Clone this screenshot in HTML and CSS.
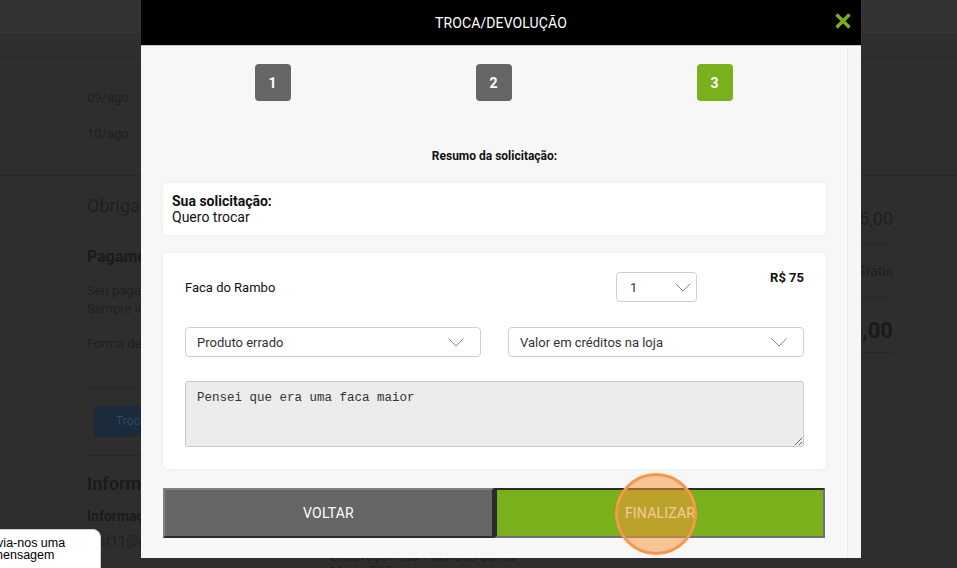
FILE: index.html
```html
<!DOCTYPE html>
<html lang="pt-BR">
<head>
<meta charset="utf-8">
<title>Troca/Devolução</title>
<link rel="stylesheet" href="styles.css">
</head>
<body>
<div class="page">
  <header class="topbar"></header>
  <div class="subbar"></div>
  <section class="dates">
    <div class="date">09/ago</div>
    <div class="date">10/ago</div>
  </section>
  <section class="summary">
    <div class="left-col">
      <div class="thanks">Obrigado por comprar conosco!</div>
      <h3 class="sec-title">Pagamento</h3>
      <p class="sec-text">Seu pagamento foi aprovado com sucesso.<br>Sempre verifique seu e-mail.</p>
      <p class="sec-text pay-form">Forma de pagamento: Boleto</p>
      <div class="divider"></div>
      <div class="action-row"><span class="bg-btn">Troca/Devolução</span></div>
      <div class="divider"></div>
      <h3 class="info-title">Informações</h3>
      <div class="info-grid">
        <div class="info-col">
          <div class="info-head">Informações de contato</div>
          <div class="info-line">josf11@gmail.com</div>
        </div>
        <div class="info-col info-col-addr">
          <div class="info-head">Informações de entrega</div>
          <div class="info-line">Nome: José Silva</div>
          <div class="info-line">Endereço: Rua Pacheco Santa</div>
          <div class="info-line">Maria 585</div>
        </div>
      </div>
    </div>
    <div class="right-col">
      <div class="tot-row tot-sub">R$ 75,00</div>
      <div class="tot-row tot-ship">Grátis</div>
      <div class="tot-row tot-total">R$ 75,00</div>
    </div>
  </section>
</div>

<div class="overlay">
  <div class="modal">
    <div class="modal-head">
      <h2 class="modal-title">TROCA/DEVOLUÇÃO</h2>
      <span class="close" aria-label="Fechar">
        <svg width="16" height="16" viewBox="0 0 16 16"><path d="M1.5 1.5 L14.5 14.5 M14.5 1.5 L1.5 14.5" stroke="#79b01b" stroke-width="3.4" fill="none"/></svg>
      </span>
    </div>
    <div class="modal-body">
      <div class="modal-content">
        <div class="steps">
          <div class="step-cell"><span class="step">1</span></div>
          <div class="step-cell"><span class="step">2</span></div>
          <div class="step-cell"><span class="step step-active">3</span></div>
        </div>
        <div class="resumo">Resumo da solicitação:</div>
        <div class="card card-request">
          <div class="req-label">Sua solicitação:</div>
          <div class="req-value">Quero trocar</div>
        </div>
        <div class="card card-item">
          <div class="item-row">
            <div class="item-name">Faca do Rambo</div>
            <div class="select select-qty"><span>1</span>
              <svg width="16" height="9" viewBox="0 0 16 9"><polyline points="0.5,0.5 8,8 15.5,0.5" fill="none" stroke="#8a8a8a" stroke-width="1"/></svg>
            </div>
            <div class="item-price">R$ 75</div>
          </div>
          <div class="select-row">
            <div class="select select-wide"><span>Produto errado</span>
              <svg width="16" height="9" viewBox="0 0 16 9"><polyline points="0.5,0.5 8,8 15.5,0.5" fill="none" stroke="#8a8a8a" stroke-width="1"/></svg>
            </div>
            <div class="select select-wide"><span>Valor em créditos na loja</span>
              <svg width="16" height="9" viewBox="0 0 16 9"><polyline points="0.5,0.5 8,8 15.5,0.5" fill="none" stroke="#8a8a8a" stroke-width="1"/></svg>
            </div>
          </div>
          <textarea class="comment">Pensei que era uma faca maior</textarea>
        </div>
        <div class="actions">
          <span class="btn btn-back">VOLTAR</span>
          <span class="btn btn-finish">FINALIZAR</span>
        </div>
      </div>
      <div class="scroll-track"></div>
    </div>
  </div>
  <div class="focus-ring"></div>
</div>

<div class="chat-bubble">Envia-nos uma<br>mensagem</div>
</body>
</html>
```

FILE: styles.css
```css
* { box-sizing: border-box; }

html, body {
  margin: 0;
  padding: 0;
  width: 957px;
  height: 568px;
  overflow: hidden;
  background: #2e2e2e;
  font-family: Roboto, "Liberation Sans", Arial, sans-serif;
}

/* ---------- dimmed background page ---------- */
.page {
  color: #1e1e1e;
}

.topbar {
  height: 35px;
  background: #333333;
  border-bottom: 1px solid #2a2a2a;
}

.subbar {
  height: 23px;
  background: #2f2f2f;
  border-bottom: 1px solid #272727;
}

.dates {
  height: 118px;
  padding: 31px 0 0 87px;
  display: flex;
  flex-direction: column;
  gap: 18px;
  border-bottom: 1px solid #272727;
}

.date {
  font-size: 13px;
  line-height: 18px;
  color: #202020;
}

.summary {
  display: flex;
  justify-content: space-between;
  padding: 0 64px 0 87px;
}

.left-col {
  width: 520px;
  padding-top: 19px;
}

.thanks {
  font-size: 18px;
  line-height: 22px;
  color: #1f1f1f;
}

.sec-title {
  margin: 30px 0 0;
  font-size: 16px;
  line-height: 20px;
  font-weight: 700;
  color: #1b1b1b;
}

.sec-text {
  margin: 15px 0 0;
  font-size: 13px;
  line-height: 18px;
  color: #202020;
}

.pay-form {
  margin-top: 17px;
}

.divider {
  margin-top: 34px;
  height: 1px;
  background: #262626;
}

.action-row {
  padding: 18px 0 0 7px;
}

.divider + .action-row + .divider {
  margin-top: 18px;
}

.bg-btn {
  display: inline-block;
  height: 31px;
  line-height: 31px;
  padding: 0 22px;
  background: #1b2b3b;
  color: #2d4864;
  font-size: 12px;
  border-radius: 2px;
}

.info-title {
  margin: 17px 0 0;
  font-size: 18px;
  line-height: 22px;
  font-weight: 700;
  color: #1b1b1b;
}

.info-grid {
  display: grid;
  grid-template-columns: 243px 1fr;
  margin-top: 12px;
}

.info-head {
  font-size: 14px;
  line-height: 18px;
  font-weight: 700;
  color: #1b1b1b;
}

.info-col .info-head + .info-line {
  margin-top: 7px;
}

.info-line {
  font-size: 14px;
  line-height: 18px;
  color: #1f1f1f;
}

.info-col-addr .info-line {
  line-height: 16px;
}

.right-col {
  width: 250px;
  margin-top: 2px;
  text-align: right;
}

.tot-row {
  border-bottom: 1px solid #262626;
  color: #1f1f1f;
}

.tot-sub {
  padding: 30px 0 14px;
  font-size: 18px;
  line-height: 22px;
}

.tot-ship {
  padding: 17px 0 17px;
  font-size: 14px;
  line-height: 18px;
}

.tot-total {
  padding: 20px 0 8px;
  font-size: 22px;
  line-height: 26px;
  font-weight: 700;
  color: #1a1a1a;
}

/* ---------- modal ---------- */
.overlay {
  position: absolute;
  inset: 0;
}

.modal {
  position: absolute;
  left: 141px;
  top: 0;
  width: 720px;
  height: 558px;
  background: #f7f7f7;
  display: flex;
  flex-direction: column;
}

.modal-head {
  position: relative;
  height: 46px;
  background: #000;
  border-bottom: 1px solid #c4c4c4;
  display: flex;
  align-items: center;
  justify-content: center;
}

.modal-title {
  margin: 0;
  font-size: 14px;
  font-weight: 400;
  color: #fff;
  line-height: 16px;
  letter-spacing: 0.1px;
}

.close {
  position: absolute;
  right: 10px;
  top: 13px;
  width: 16px;
  height: 16px;
  display: block;
}

.close svg { display: block; }

.modal-body {
  flex: 1;
  display: flex;
}

.modal-content {
  width: 706px;
  padding: 18px 21px 20px 22px;
}

.scroll-track {
  width: 14px;
  background: #f6f6f6;
  border-left: 1px solid #ebebeb;
}

.steps {
  display: grid;
  grid-template-columns: repeat(3, 221px);
  margin-left: -1px;
}

.step-cell {
  display: flex;
  justify-content: center;
}

.step {
  width: 36px;
  height: 37px;
  border-radius: 4px;
  background: #666666;
  color: #fff;
  font-size: 14px;
  font-weight: 700;
  display: flex;
  align-items: center;
  justify-content: center;
}

.step-active {
  background: #79b01b;
}

.resumo {
  margin-top: 48px;
  text-align: center;
  font-size: 12px;
  line-height: 14px;
  font-weight: 700;
  color: #111;
}

.card {
  background: #fff;
  border-radius: 5px;
  box-shadow: 0 0 4px rgba(0, 0, 0, 0.05);
}

.card-request {
  margin-top: 20px;
  padding: 10px 9px;
  font-size: 14px;
  line-height: 16px;
  color: #111;
}

.req-label {
  font-weight: 700;
}

.card-item {
  margin-top: 18px;
  padding: 19px 22px 22px;
}

.item-row {
  display: flex;
  align-items: center;
}

.item-name {
  flex: 1;
  font-size: 13px;
  color: #111;
}

.select {
  height: 30px;
  background: #fff;
  border: 1px solid #cfcfcf;
  border-radius: 4px;
  display: flex;
  align-items: center;
  justify-content: space-between;
  font-size: 13px;
  color: #333;
}

.select svg { display: block; }

.select-qty {
  width: 81px;
  padding: 0 5px 0 13px;
  margin-right: 1px;
}

.item-price {
  width: 106px;
  align-self: flex-start;
  text-align: right;
  font-size: 13px;
  line-height: 12px;
  font-weight: 700;
  color: #111;
}

.select-row {
  margin-top: 25px;
  display: flex;
  justify-content: space-between;
}

.select-wide {
  width: 296px;
  padding: 0 16px 0 11px;
}

.comment {
  display: block;
  margin-top: 24px;
  width: 100%;
  height: 66px;
  padding: 8px 11px;
  background: #ececec;
  border: 1px solid #c9c9c9;
  border-radius: 3px;
  font-family: "Liberation Mono", "Courier New", monospace;
  font-size: 12.5px;
  line-height: 16px;
  color: #333;
  resize: vertical;
}

.actions {
  margin-top: 19px;
  display: flex;
}

.btn {
  width: 331px;
  height: 50px;
  display: flex;
  align-items: center;
  justify-content: center;
  color: #fff;
  font-size: 14px;
  font-weight: 400;
  letter-spacing: 0.2px;
  border-width: 2px;
  border-style: solid;
}

.btn-back {
  background: #666666;
  border-color: #808080 #2b2b2b #2b2b2b #808080;
}

.btn-finish {
  background: #79b01b;
  border-width: 2px 2px 2px 3px;
  border-color: #2b2b2b #707070 #707070 #2b2b2b;
}

.focus-ring {
  position: absolute;
  left: 615px;
  top: 473px;
  width: 82px;
  height: 82px;
  border-radius: 50%;
  border: 3px solid #f2994a;
  background: rgba(246, 150, 60, 0.52);
}

/* ---------- chat bubble ---------- */
.chat-bubble {
  position: absolute;
  left: -54px;
  top: 529px;
  width: 155px;
  height: 50px;
  padding-top: 7px;
  background: #fff;
  border: 1px solid #d0d0d0;
  border-radius: 8px;
  font-family: "Liberation Sans", Arial, sans-serif;
  font-size: 12.5px;
  line-height: 12px;
  text-align: center;
  color: #000;
}
```
